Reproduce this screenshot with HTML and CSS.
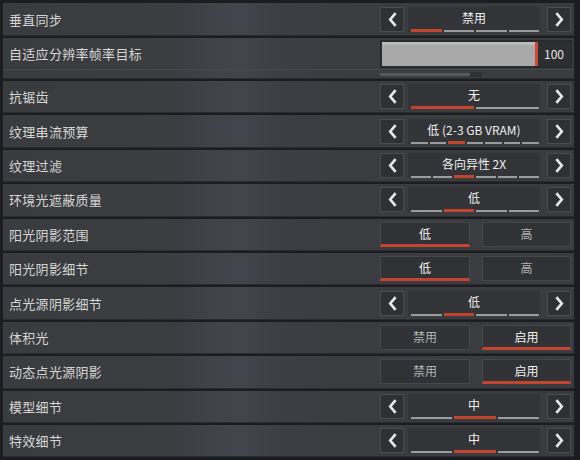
FILE: index.html
```html
<!DOCTYPE html>
<html lang="zh">
<head>
<meta charset="utf-8">
<title>视频设置</title>
<link rel="stylesheet" href="styles.css">
</head>
<body>
<div class="panel">
  <div class="row first">
    <span class="label">垂直同步</span>
    <div class="cycler">
      <div class="arrow"><svg viewBox="0 0 10 16"><polyline points="7.5,2 2.5,8 7.5,14"/></svg></div>
      <div class="value"><span>禁用</span><div class="segs"><i class="on"></i><i></i><i></i><i></i></div></div>
      <div class="arrow"><svg viewBox="0 0 10 16"><polyline points="2.5,2 7.5,8 2.5,14"/></svg></div>
    </div>
  </div>

  <div class="row slider-row">
    <div class="slider-main">
      <span class="label">自适应分辨率帧率目标</span>
      <div class="slider">
        <div class="slider-bar"></div>
        <span class="slider-num">100</span>
      </div>
    </div>
    <div class="slider-track"><div class="track-line"></div><div class="track-end"></div></div>
  </div>

  <div class="row">
    <span class="label">抗锯齿</span>
    <div class="cycler">
      <div class="arrow"><svg viewBox="0 0 10 16"><polyline points="7.5,2 2.5,8 7.5,14"/></svg></div>
      <div class="value"><span>无</span><div class="segs"><i class="on"></i><i></i></div></div>
      <div class="arrow"><svg viewBox="0 0 10 16"><polyline points="2.5,2 7.5,8 2.5,14"/></svg></div>
    </div>
  </div>

  <div class="row">
    <span class="label">纹理串流预算</span>
    <div class="cycler">
      <div class="arrow"><svg viewBox="0 0 10 16"><polyline points="7.5,2 2.5,8 7.5,14"/></svg></div>
      <div class="value"><span>低 (2-3 GB VRAM)</span><div class="segs"><i></i><i></i><i class="on"></i><i></i><i></i><i></i><i></i></div></div>
      <div class="arrow"><svg viewBox="0 0 10 16"><polyline points="2.5,2 7.5,8 2.5,14"/></svg></div>
    </div>
  </div>

  <div class="row">
    <span class="label">纹理过滤</span>
    <div class="cycler">
      <div class="arrow"><svg viewBox="0 0 10 16"><polyline points="7.5,2 2.5,8 7.5,14"/></svg></div>
      <div class="value"><span>各向异性 2X</span><div class="segs"><i></i><i></i><i class="on"></i><i></i><i></i><i></i></div></div>
      <div class="arrow"><svg viewBox="0 0 10 16"><polyline points="2.5,2 7.5,8 2.5,14"/></svg></div>
    </div>
  </div>

  <div class="row">
    <span class="label">环境光遮蔽质量</span>
    <div class="cycler">
      <div class="arrow"><svg viewBox="0 0 10 16"><polyline points="7.5,2 2.5,8 7.5,14"/></svg></div>
      <div class="value"><span>低</span><div class="segs"><i></i><i class="on"></i><i></i><i></i></div></div>
      <div class="arrow"><svg viewBox="0 0 10 16"><polyline points="2.5,2 7.5,8 2.5,14"/></svg></div>
    </div>
  </div>

  <div class="row">
    <span class="label">阳光阴影范围</span>
    <div class="toggle">
      <div class="opt sel">低</div>
      <div class="opt">高</div>
    </div>
  </div>

  <div class="row">
    <span class="label">阳光阴影细节</span>
    <div class="toggle">
      <div class="opt sel">低</div>
      <div class="opt">高</div>
    </div>
  </div>

  <div class="row">
    <span class="label">点光源阴影细节</span>
    <div class="cycler">
      <div class="arrow"><svg viewBox="0 0 10 16"><polyline points="7.5,2 2.5,8 7.5,14"/></svg></div>
      <div class="value"><span>低</span><div class="segs"><i></i><i class="on"></i><i></i><i></i></div></div>
      <div class="arrow"><svg viewBox="0 0 10 16"><polyline points="2.5,2 7.5,8 2.5,14"/></svg></div>
    </div>
  </div>

  <div class="row">
    <span class="label">体积光</span>
    <div class="toggle">
      <div class="opt">禁用</div>
      <div class="opt sel">启用</div>
    </div>
  </div>

  <div class="row">
    <span class="label">动态点光源阴影</span>
    <div class="toggle">
      <div class="opt">禁用</div>
      <div class="opt sel">启用</div>
    </div>
  </div>

  <div class="row">
    <span class="label">模型细节</span>
    <div class="cycler">
      <div class="arrow"><svg viewBox="0 0 10 16"><polyline points="7.5,2 2.5,8 7.5,14"/></svg></div>
      <div class="value"><span>中</span><div class="segs"><i></i><i class="on"></i><i></i></div></div>
      <div class="arrow"><svg viewBox="0 0 10 16"><polyline points="2.5,2 7.5,8 2.5,14"/></svg></div>
    </div>
  </div>

  <div class="row">
    <span class="label">特效细节</span>
    <div class="cycler">
      <div class="arrow"><svg viewBox="0 0 10 16"><polyline points="7.5,2 2.5,8 7.5,14"/></svg></div>
      <div class="value"><span>中</span><div class="segs"><i></i><i class="on"></i><i></i></div></div>
      <div class="arrow"><svg viewBox="0 0 10 16"><polyline points="2.5,2 7.5,8 2.5,14"/></svg></div>
    </div>
  </div>
</div>
</body>
</html>
```

FILE: styles.css
```css
* { box-sizing: border-box; }

html, body {
  margin: 0;
  padding: 0;
  background: #1c1d20;
  width: 580px;
  height: 460px;
  overflow: hidden;
  font-family: "Noto Sans CJK SC", "Noto Sans", "Liberation Sans", sans-serif;
}

.panel {
  width: 571px;
  margin-left: 3px;
  padding-top: 3px;
  display: flex;
  flex-direction: column;
  gap: 2px;
}

.row {
  height: 32.4px;
  display: flex;
  align-items: center;
  justify-content: space-between;
  padding: 0 3px 0 6px;
  background: linear-gradient(90deg, #3a3b3e 0%, #3b3d41 30%, #41434b 37%, #43454e 42%, #3d3f44 47%, #3a3c40 60%, #393b3e 100%);
  border-bottom: 1px solid #2a2b2e;
}

.row.first { height: 33px; }

.label {
  color: #d6d6d6;
  font-size: 13px;
  letter-spacing: 0.3px;
}

/* cycler control */
.cycler {
  width: 191px;
  height: 25px;
  display: flex;
  align-items: stretch;
}

.arrow {
  width: 24px;
  background: #2e3033;
  border: 1px solid #4a4c50;
  display: flex;
  align-items: center;
  justify-content: center;
}

.arrow svg {
  width: 9px;
  height: 15px;
}

.arrow polyline {
  fill: none;
  stroke: #e6e6e6;
  stroke-width: 3;
  stroke-linecap: square;
  stroke-linejoin: miter;
}

.value {
  width: 132px;
  margin: 0 7px 0 4px;
  background: #323438;
  display: flex;
  flex-direction: column;
  align-items: center;
  justify-content: space-between;
  padding-top: 3px;
}

.value span {
  color: #f0f0f0;
  font-size: 12px;
  line-height: 16px;
}

.segs {
  width: 100%;
  height: 3px;
  padding: 0 1px 0 3px;
  display: flex;
  align-items: flex-end;
  gap: 2px;
}

.segs i {
  flex: 1;
  height: 2px;
  background: #9c9c9c;
}

.segs i.on {
  height: 3px;
  background: #c4452f;
}

/* two-option toggle */
.toggle {
  width: 191px;
  height: 25px;
  display: grid;
  grid-template-columns: 90px 89px;
  column-gap: 12px;
}

.opt {
  background: #303236;
  border: 1px solid #45474b;
  color: #b4b4b4;
  font-size: 12px;
  display: flex;
  align-items: center;
  justify-content: center;
  padding-bottom: 2px;
}

.opt.sel {
  color: #f2f2f2;
  border-bottom: 3px solid #c4452f;
  padding-bottom: 0;
}

/* slider row */
.row.slider-row {
  height: 41px;
  flex-direction: column;
  align-items: stretch;
  justify-content: flex-start;
  padding: 0;
}

.slider-main {
  height: 31px;
  display: flex;
  align-items: center;
  justify-content: space-between;
  padding: 0 2px 0 6px;
}

.slider {
  width: 192px;
  height: 28px;
  background: #2c2e31;
  border: 1px solid #26282b;
  display: flex;
  align-items: stretch;
  padding: 1px;
}

.slider-bar {
  width: 156px;
  background: linear-gradient(180deg, #b4b4b4 0px, #c2c2c2 2px, #a9a9a9 3px, #a8a8a8 100%);
  border-right: 3px solid #d0483a;
}

.slider-num {
  flex: 1;
  color: #e4e4e4;
  font-size: 12px;
  display: flex;
  align-items: center;
  justify-content: center;
}

.slider-track {
  flex: 1;
  border-top: 1px solid #46484c;
  display: flex;
  align-items: center;
  padding-left: 377px;
}

.track-line {
  width: 90px;
  height: 3px;
  background: #56585c;
}

.track-end {
  width: 12px;
  height: 5px;
  background: #2e3033;
}
```
